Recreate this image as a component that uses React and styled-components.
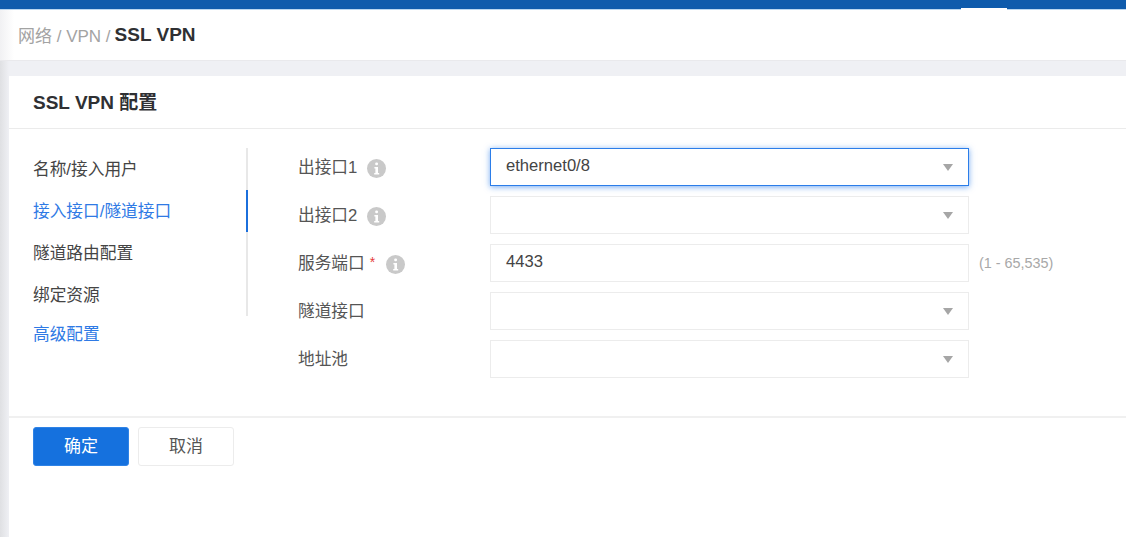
import React from 'react'
import styled, { createGlobalStyle } from 'styled-components'

const GlobalStyle = createGlobalStyle`
  html, body {
    margin: 0;
    padding: 0;
    height: 100%;
    background: #fff;
    overflow: hidden;
  }
  body {
    font-family: "Liberation Sans", "Noto Sans CJK SC", sans-serif;
    color: #333;
  }
`

const Page = styled.div`
  width: 1126px;
  height: 537px;
  display: flex;
  flex-direction: column;
  overflow: hidden;
`
const TopBar = styled.div`
  height: 9px;
  flex: none;
  background: #0f5bac;
  border-bottom: 1px solid #b9d6f0;
  box-sizing: content-box;
  display: flex;
  justify-content: flex-end;
  align-items: flex-end;
  padding-right: 119px;
`
const ActiveTab = styled.div`
  width: 46px;
  height: 2px;
  margin-bottom: -1px;
  background: #fff;
`
const Crumbs = styled.div`
  height: 51px;
  flex: none;
  box-sizing: border-box;
  padding: 0 0 1px 18px;
  display: flex;
  align-items: center;
  gap: 4px;
  font-size: 17px;
  color: #a3a3a3;
  background: linear-gradient(90deg, #f1f1f3 0, #fff 14px);
  border-bottom: 1px solid #e9e9ec;
`
const CrumbCurrent = styled.b`
  color: #2f3033;
  font-size: 19px;
  font-weight: 700;
`
const Workspace = styled.div`
  flex: 1;
  display: flex;
  flex-direction: column;
  background: linear-gradient(90deg, #dfe0e3 0, #eff0f4 9px);
  padding: 15px 0 0 9px;
  min-height: 0;
`
const Card = styled.div`
  flex: 1;
  background: #fff;
  display: flex;
  flex-direction: column;
`
const CardTitle = styled.h2`
  margin: 0;
  height: 53px;
  flex: none;
  box-sizing: border-box;
  padding: 0 0 3px 24px;
  display: flex;
  align-items: center;
  font-size: 19px;
  font-weight: 700;
  color: #2f3033;
  border-bottom: 1px solid #ebebeb;
`
const Body = styled.div`
  height: 289px;
  flex: none;
  box-sizing: border-box;
  display: flex;
  padding-top: 19px;
  border-bottom: 2px solid #f0f0f0;
`
const Side = styled.nav`
  width: 239px;
  flex: none;
`
const Steps = styled.div`
  height: 168px;
  border-right: 2px solid #e8e8e8;
  box-sizing: border-box;
  position: relative;
`
const Step = styled.div`
  height: 42px;
  box-sizing: border-box;
  padding: 0 0 3px 24px;
  display: flex;
  align-items: center;
  font-size: 16.7px;
  color: ${p => (p.$active ? '#2f7ae5' : '#444')};
`
const StepMark = styled.span`
  position: absolute;
  right: -2px;
  top: 42px;
  width: 2px;
  height: 42px;
  background: #1b6fdc;
`
const AdvancedLink = styled.a`
  display: block;
  padding-left: 24px;
  margin-top: 9px;
  font-size: 16.7px;
  line-height: 20px;
  color: #2f7ae5;
`
const Form = styled.div`
  padding-left: 50px;
  display: flex;
  flex-direction: column;
  gap: 10px;
`
const Row = styled.div`
  display: flex;
  align-items: center;
  height: 38px;
`
const Label = styled.div`
  width: 192px;
  flex: none;
  display: flex;
  align-items: center;
  font-size: 16.7px;
  color: #555;
  padding-bottom: 3px;
`
const Required = styled.span`
  color: #e5383b;
  margin: 0 1px 0 5px;
  font-size: 14px;
`
const InfoBadge = styled.svg`
  width: 19px;
  height: 19px;
  margin-left: 10px;
  margin-top: 5px;
`
const Field = styled.div`
  width: 479px;
  height: 38px;
  box-sizing: border-box;
  padding: 0 15px;
  display: flex;
  align-items: center;
  justify-content: space-between;
  font-size: 16.6px;
  color: #444;
  background: #fff;
  border: 1px solid ${p => (p.$focused ? '#2b7de9' : '#ececec')};
  box-shadow: ${p => (p.$focused ? '0 1px 6px rgba(43, 125, 233, 0.65)' : 'none')};
`
const FieldValue = styled.span`
  margin-top: -3px;
`
const Caret = styled.span`
  width: 0;
  height: 0;
  margin: 1px 0 0 0;
  border-left: 5px solid transparent;
  border-right: 5px solid transparent;
  border-top: 7px solid #a6a6a6;
`
const Hint = styled.span`
  margin-left: 10px;
  font-size: 14.4px;
  color: #a8a8a8;
`
const Actions = styled.div`
  display: flex;
  gap: 9px;
  padding: 9px 0 0 24px;
`
const Button = styled.button`
  width: 96px;
  height: 39px;
  border-radius: 3px;
  font: inherit;
  font-size: 17px;
  padding: 0 0 5px;
  color: ${p => (p.$primary ? '#fff' : '#555')};
  background: ${p => (p.$primary ? '#1571de' : '#fff')};
  border: 1px solid ${p => (p.$primary ? '#2f83e6' : '#ececec')};
`

function Info() {
  return (
    <InfoBadge viewBox="0 0 19 19">
      <circle cx="9.5" cy="9.5" r="9.5" fill="#c9c9c9" />
      <rect x="8.2" y="3.4" width="2.8" height="2.8" rx="1.2" fill="#fff" />
      <path d="M7.4 8h3.6v6h1.2v1.5H7.2V14h1.2V9.4h-1z" fill="#fff" />
    </InfoBadge>
  )
}

const fields = [
  { label: '出接口1', info: true, value: 'ethernet0/8', select: true, focused: true },
  { label: '出接口2', info: true, select: true },
  { label: '服务端口', required: true, info: true, value: '4433', hint: '(1 - 65,535)' },
  { label: '隧道接口', select: true },
  { label: '地址池', select: true },
]

export default function App() {
  return (
    <Page>
      <GlobalStyle />
      <TopBar>
        <ActiveTab />
      </TopBar>
      <Crumbs>
        网络 / VPN / <CrumbCurrent>SSL VPN</CrumbCurrent>
      </Crumbs>
      <Workspace>
        <Card>
          <CardTitle>SSL VPN 配置</CardTitle>
          <Body>
            <Side>
              <Steps>
                <Step>名称/接入用户</Step>
                <Step $active>接入接口/隧道接口</Step>
                <Step>隧道路由配置</Step>
                <Step>绑定资源</Step>
                <StepMark />
              </Steps>
              <AdvancedLink>高级配置</AdvancedLink>
            </Side>
            <Form>
              {fields.map((f) => (
                <Row key={f.label}>
                  <Label>
                    {f.label}
                    {f.required && <Required>*</Required>}
                    {f.info && <Info />}
                  </Label>
                  <Field $focused={f.focused}>
                    <FieldValue>{f.value}</FieldValue>
                    {f.select && <Caret />}
                  </Field>
                  {f.hint && <Hint>{f.hint}</Hint>}
                </Row>
              ))}
            </Form>
          </Body>
          <Actions>
            <Button $primary>确定</Button>
            <Button>取消</Button>
          </Actions>
        </Card>
      </Workspace>
    </Page>
  )
}
